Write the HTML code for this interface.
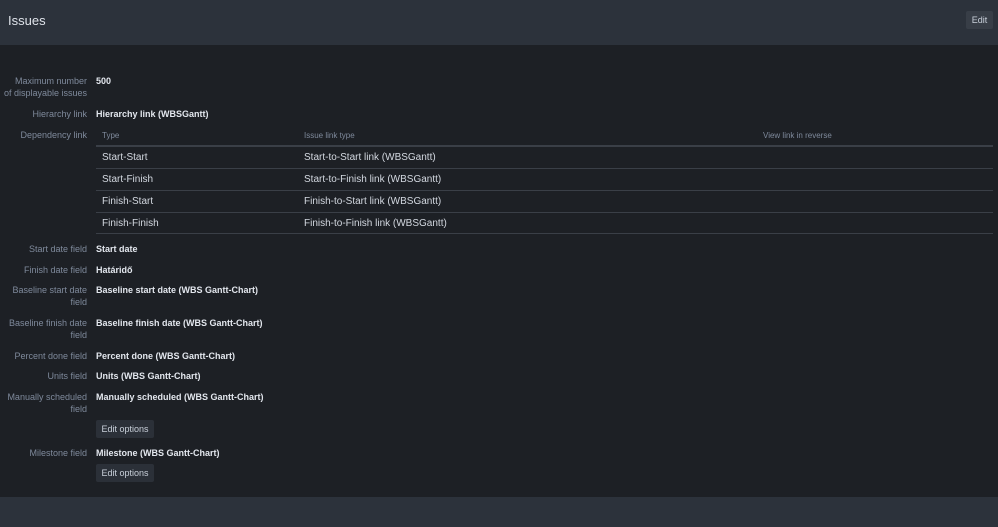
<!DOCTYPE html>
<html><head><meta charset="utf-8"><style>
*{margin:0;padding:0;box-sizing:border-box}
body{width:998px;height:527px;background:#1d2025;font-family:"Liberation Sans",sans-serif;position:relative;overflow:hidden}
.hdr{position:absolute;left:0;top:0;width:998px;height:45px;background:#2c323b}
.hdr h1{position:absolute;left:8px;top:13px;font-size:13px;font-weight:normal;color:#dfe3ea}
.edit{position:absolute;left:966px;top:11px;width:27px;height:18px;background:#383e47;color:#c9d0da;font-size:9px;line-height:18px;text-align:center;border-radius:2px}
.ftr{position:absolute;left:0;top:497px;width:998px;height:30px;background:#2c323b}
.l{position:absolute;left:0;width:87px;text-align:right;color:#7f8a9c;font-size:9px;line-height:12px}
.v{position:absolute;left:96px;color:#e3e7ee;font-size:9px;font-weight:bold;line-height:12px}
.th{position:absolute;color:#7f8a9c;font-size:8px}
.td{position:absolute;color:#d3d8e0;font-size:10px}
.line{position:absolute;left:96px;width:897px;height:1px;background:#3a3f47}
.btn{position:absolute;left:96px;width:58px;height:18px;background:#2b3038;color:#c9d0da;font-size:9px;line-height:18px;text-align:center;border-radius:2px}
</style></head><body>
<div class="hdr"><h1>Issues</h1><div class="edit">Edit</div></div>

<div class="l" style="top:75px">Maximum number<br>of displayable issues</div><div class="v" style="top:75px">500</div>
<div class="l" style="top:108px">Hierarchy link</div><div class="v" style="top:108px">Hierarchy link (WBSGantt)</div>
<div class="l" style="top:129px">Dependency link</div>
<div class="th" style="left:102px;top:131px">Type</div>
<div class="th" style="left:304px;top:131px">Issue link type</div>
<div class="th" style="left:763px;top:131px">View link in reverse</div>
<div class="line" style="top:145px;height:2px"></div>
<div class="td" style="left:102px;top:152px">Start-Start</div><div class="td" style="left:304px;top:152px">Start-to-Start link (WBSGantt)</div>
<div class="line" style="top:168px"></div>
<div class="td" style="left:102px;top:174px">Start-Finish</div><div class="td" style="left:304px;top:174px">Start-to-Finish link (WBSGantt)</div>
<div class="line" style="top:190px"></div>
<div class="td" style="left:102px;top:196px">Finish-Start</div><div class="td" style="left:304px;top:196px">Finish-to-Start link (WBSGantt)</div>
<div class="line" style="top:212px"></div>
<div class="td" style="left:102px;top:218px">Finish-Finish</div><div class="td" style="left:304px;top:218px">Finish-to-Finish link (WBSGantt)</div>
<div class="line" style="top:233px"></div>

<div class="l" style="top:243px">Start date field</div><div class="v" style="top:243px">Start date</div>
<div class="l" style="top:264px">Finish date field</div><div class="v" style="top:264px">Határidő</div>
<div class="l" style="top:284px">Baseline start date<br>field</div><div class="v" style="top:284px">Baseline start date (WBS Gantt-Chart)</div>
<div class="l" style="top:317px">Baseline finish date<br>field</div><div class="v" style="top:317px">Baseline finish date (WBS Gantt-Chart)</div>
<div class="l" style="top:350px">Percent done field</div><div class="v" style="top:350px">Percent done (WBS Gantt-Chart)</div>
<div class="l" style="top:370px">Units field</div><div class="v" style="top:370px">Units (WBS Gantt-Chart)</div>
<div class="l" style="top:391px">Manually scheduled<br>field</div><div class="v" style="top:391px">Manually scheduled (WBS Gantt-Chart)</div>
<div class="btn" style="top:420px">Edit options</div>
<div class="l" style="top:447px">Milestone field</div><div class="v" style="top:447px">Milestone (WBS Gantt-Chart)</div>
<div class="btn" style="top:464px">Edit options</div>

<div class="ftr"></div>
</body></html>
